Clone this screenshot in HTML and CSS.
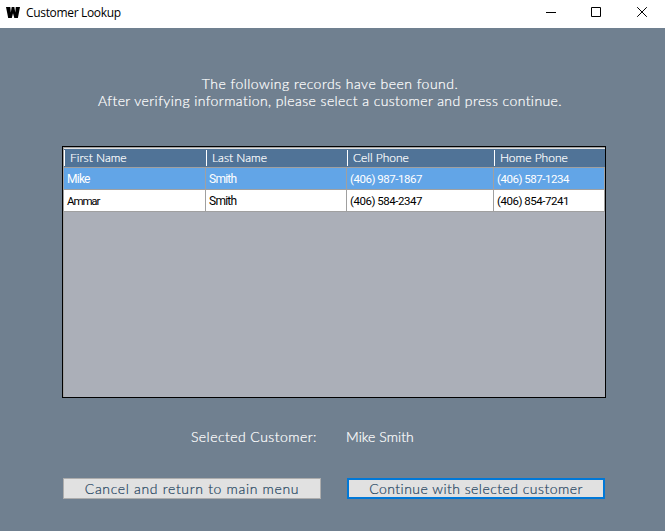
FILE: index.html
```html
<!DOCTYPE html>
<html lang="en">
<head>
<meta charset="utf-8">
<title>Customer Lookup</title>
<link rel="stylesheet" href="styles.css">
</head>
<body>
<header class="titlebar">
  <svg class="logo" width="14" height="11" viewBox="0 0 14 11"><path d="M0 0H4.3L4.8 5.6L5.7 0H8.3L9.3 5.6L9.8 0H14L11.9 11H8.3L7 6.2L5.8 11H2.2Z"/></svg>
  <span class="title">Customer Lookup</span>
  <div class="controls">
    <svg width="45" height="28" viewBox="0 0 45 28"><path d="M16 12.5H26"/></svg>
    <svg width="45" height="28" viewBox="0 0 45 28"><path d="M16.5 7.5H25.5V16.5H16.5Z"/></svg>
    <svg width="45" height="28" viewBox="0 0 45 28"><path d="M17.2 7.2L26.8 16.8M26.8 7.2L17.2 16.8"/></svg>
  </div>
</header>
<main class="content">
  <p class="message"><span class="found">The following records have been found.</span><br><span class="verify">After verifying information, please select a customer and press continue.</span></p>
  <div class="grid">
    <div class="row head"><span>First Name</span><span>Last Name</span><span>Cell Phone</span><span>Home Phone</span></div>
    <div class="row selected"><span>Mike</span><span>Smith</span><span class="phone">(406) 987-1867</span><span class="phone">(406) 587-1234</span></div>
    <div class="row"><span class="wide">Ammar</span><span>Smith</span><span class="phone">(406) 584-2347</span><span class="phone">(406) 854-7241</span></div>
  </div>
  <div class="selection"><span class="label">Selected Customer:</span><span class="name">Mike Smith</span></div>
  <div class="actions"><button class="cancel">Cancel and return to main menu</button><button class="continue">Continue with selected customer</button></div>
</main>
</body>
</html>
```
FILE: styles.css
```css
* { box-sizing: border-box; }
body { margin: 0; width: 665px; height: 531px; overflow: hidden; background: #708090; font-family: Lato, sans-serif; font-variant-ligatures: none; }
.titlebar { height: 28px; background: #fff; display: flex; align-items: flex-start; padding-left: 6px; }
.logo { margin-top: 7px; }
.title { font: 12px/16px "Open Sans", sans-serif; letter-spacing: -0.33px; color: #000; margin: 5px 0 0 6px; white-space: nowrap; }
.controls { margin-left: auto; display: flex; }
.controls path { fill: none; stroke: #000; }
.content { padding: 47px 0 0 62px; }
.message { margin: 0; width: 536px; text-align: center; color: #fff; font-size: 14px; font-weight: 300; line-height: 17px; white-space: nowrap; }
.message, .selection, .row.head, button { -webkit-text-stroke: 0.2px currentColor; }
.found { letter-spacing: 0.47px; }
.verify { letter-spacing: 0.41px; }
.grid { width: 544px; height: 252px; margin-top: 37px; border: 1px solid #000; background: #abafb8; padding: 1px 1px 0; box-shadow: inset 1px 1px #a0a0a0; }
.row { display: grid; grid-template-columns: 142px 141px 147px 111px; width: 541px; height: 22px; font: 12px/23px Roboto, sans-serif; letter-spacing: -0.75px; background: #fff; color: #000; }
.row span { padding-left: 3px; border-right: 1px solid #a0a0a0; border-bottom: 1px solid #a0a0a0; white-space: nowrap; overflow: hidden; }
.row .phone { font-size: 11.5px; letter-spacing: -0.48px; }
.row .wide { font-size: 11.5px; letter-spacing: -1.1px; }
.row.selected { background: #62a5e7; color: #fff; }
.row.head { height: 20px; font: 300 12px/18px Lato, sans-serif; letter-spacing: 0; background: #507397; color: #fff; border-top: 1px solid #e3e3e3; }
.row.head span { border-right: 0; padding-left: 6px; background: linear-gradient(#fff, #fff) 0 1px / 1px 16px no-repeat; }
.selection { display: flex; margin-top: 30px; height: 18px; color: #fff; font-size: 14px; font-weight: 300; line-height: 18px; white-space: nowrap; }
.label { margin-left: 129px; width: 155px; letter-spacing: 0.45px; }
.name { letter-spacing: 0.05px; }
.actions { display: flex; gap: 26px; margin: 32px 0 0 1px; }
button { width: 258px; height: 21px; padding: 0; border: 1px solid #adadad; background: #e1e1e1; color: #24445f; font: 300 14px/19px Lato, sans-serif; letter-spacing: 0.67px; font-variant-ligatures: none; white-space: nowrap; }
.continue { border: 2px solid #0078d7; line-height: 17px; letter-spacing: 0.47px; }
```
